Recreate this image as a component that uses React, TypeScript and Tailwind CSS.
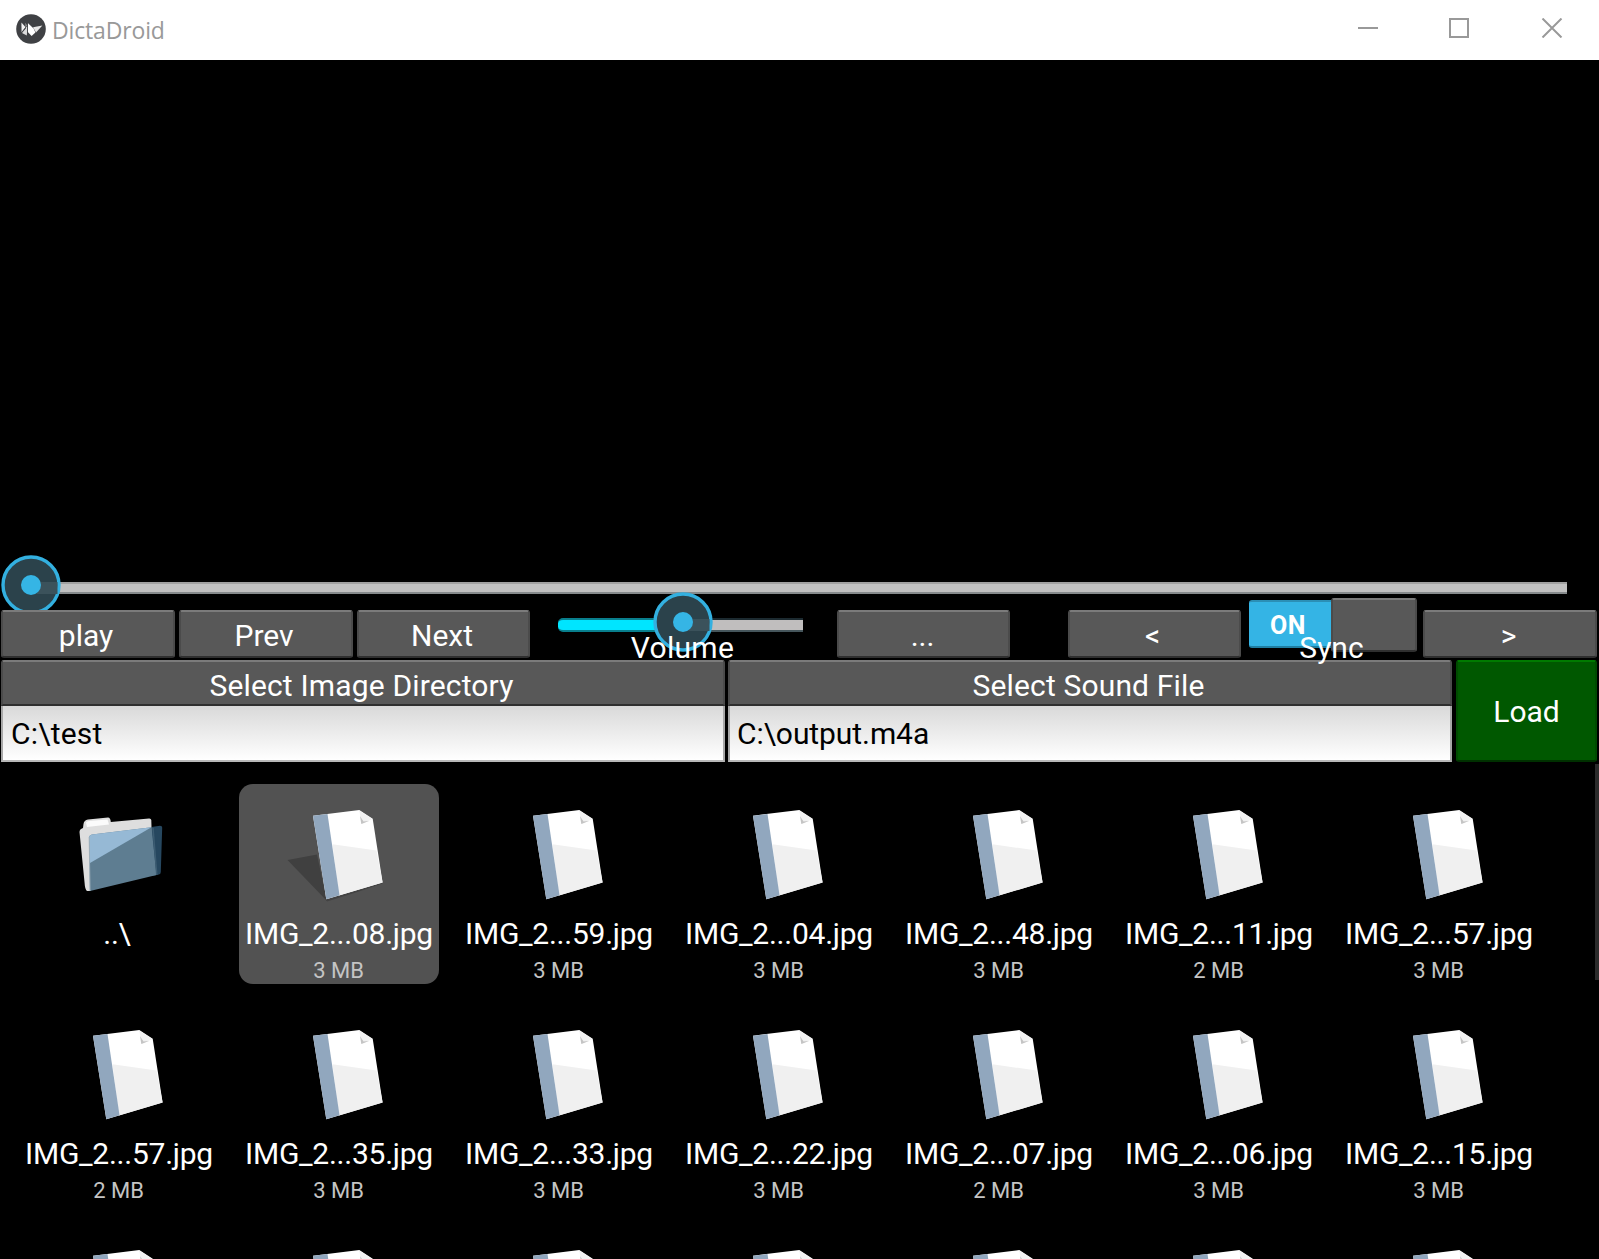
import type { ReactNode } from "react";

type Entry = { name: string; size?: string; folder?: boolean; selected?: boolean };

const entries: Entry[] = [
  { name: "..\\", folder: true },
  { name: "IMG_2...08.jpg", size: "3 MB", selected: true },
  { name: "IMG_2...59.jpg", size: "3 MB" },
  { name: "IMG_2...04.jpg", size: "3 MB" },
  { name: "IMG_2...48.jpg", size: "3 MB" },
  { name: "IMG_2...11.jpg", size: "2 MB" },
  { name: "IMG_2...57.jpg", size: "3 MB" },
  { name: "IMG_2...57.jpg", size: "2 MB" },
  { name: "IMG_2...35.jpg", size: "3 MB" },
  { name: "IMG_2...33.jpg", size: "3 MB" },
  { name: "IMG_2...22.jpg", size: "3 MB" },
  { name: "IMG_2...07.jpg", size: "2 MB" },
  { name: "IMG_2...06.jpg", size: "3 MB" },
  { name: "IMG_2...15.jpg", size: "3 MB" },
  ...Array.from({ length: 7 }, () => ({ name: "" })),
];

function AppLogo() {
  return (
    <svg className="h-[30px] w-[30px]" viewBox="0 0 30 30">
      <circle cx="15" cy="15" r="14.8" fill="#3f4144" />
      <path d="M5.4 8.400L9.600 13.200L5.600 18.200Z" fill="#f4f4f4" />
      <path d="M9.600 8.800L11.400 13.600L10.800 21.400L6 19L9.800 14.400Z" fill="#dcdcdc" />
      <path d="M11.800 9L17.600 14.600L19.400 18.600L15.600 22L11.800 18Z" fill="#fff" />
      <path d="M17 13.200L26.400 11.400L20 18.400Z" fill="#e6e6e6" />
      <path d="M5.600 18.600L11.600 11M11.500 9V20" stroke="#3f4144" strokeWidth="0.8" />
    </svg>
  );
}

function TitleBar() {
  return (
    <header className="flex h-[60px] shrink-0 items-start bg-white pl-4">
      <div className="pt-[14px]">
        <AppLogo />
      </div>
      <span className="ml-[6px] mt-[13px] font-['Open_Sans',sans-serif] text-[23px] leading-[34px] tracking-[-0.15px] text-[#999999]">
        DictaDroid
      </span>
      <svg className="ml-auto mt-[18px] h-5 w-[241px]" viewBox="0 0 241 20" fill="none" stroke="#999" strokeWidth="2">
        <path d="M0 10H20" />
        <rect x="92" y="1" width="18" height="18" />
        <path d="M184.5 0.5L203.5 19.5M203.5 0.5L184.5 19.5" />
      </svg>
    </header>
  );
}

function Knob() {
  return (
    <svg className="h-[60px] w-[60px]" viewBox="0 0 60 60">
      <circle cx="30" cy="30" r="28" fill="#2b424b" stroke="#33b0e0" strokeWidth="3.4" />
      <path d="M39 27H56.5V39H35Q39.500 36 39 27Z" fill="#3b525b" />
      <circle cx="30" cy="30" r="10" fill="#35b5e5" />
    </svg>
  );
}

function Btn({ className = "", children }: { className?: string; children?: ReactNode }) {
  return (
    <button
      className={`block rounded-[3px] border-2 border-x-[#4b4b4b] border-b-[#2f2f2f] border-t-[#7b7b7b] bg-[#585858] text-center text-white ${className}`}
    >
      {children}
    </button>
  );
}

function FileIcon() {
  return (
    <svg className="block h-[120px] w-[200px]" viewBox="0 0 200 120">
      <path d="M48.500 76L78 70.500L88 117Z" fill="#000" fillOpacity="0.22" />
      <path d="M87 115.500L88 117.500L120 107.500L143.500 99.500V98Z" fill="#000" fillOpacity="0.18" />
      <path d="M74 31.700L120.300 26L133.700 34.700L143.600 98.500L87.300 115.300Z" fill="#fff" />
      <path d="M93.500 60.300L137.500 66.500L143.600 98.500L100 111.500Z" fill="#f0f0f0" />
      <path d="M74 31.700L88.500 30L100.500 111.300L87.300 115.300Z" fill="#91a7be" />
      <path d="M120.300 26.500L122.600 40L133.500 35Z" fill="#f1f1f1" />
      <path d="M121 32L122.300 40L130 37L124.500 37.500Z" fill="#c4c4c4" />
    </svg>
  );
}

function FolderIcon() {
  return (
    <svg className="block h-[120px] w-[200px]" viewBox="0 0 200 120">
      <path
        d="M64.500 40Q65 36 69 35.500L89 33.500Q91.500 33.500 91.800 38L130 34.500Q132 34.300 132.300 36L133 60L71 107L68 107Q66 106 65.500 98L60.500 48Q60.500 45 64 44Z"
        fill="#dedede"
      />
      <path d="M67 38.500Q68 37 70 37L88.500 35.500L90 40.500L68 43Z" fill="#fbfbfb" />
      <path d="M132.500 43L141 41.700Q143.300 41.700 143.200 43.500L141.800 88Q141.700 90 140 90.500L133 92Z" fill="#26475f" />
      <path d="M70 54Q70 51 73 50.500L132.500 43.200L137.500 91L71 107Z" fill="#5e7d91" />
      <path d="M70 54Q70 51 73 50.500L132.500 43.200L71 79Z" fill="#96b9d5" />
      <path d="M134 44L137.800 91" stroke="#3c5c72" strokeWidth="1.500" />
      <path d="M70.200 53L71 107" stroke="#9fb0bb" strokeWidth="1" />
    </svg>
  );
}

function Tile({ entry }: { entry: Entry }) {
  return (
    <div
      className={`h-[200px] w-[200px] text-center ${entry.selected ? "rounded-[14px] bg-[#525252]" : ""}`}
    >
      {entry.folder ? <FolderIcon /> : <FileIcon />}
      <div
        className={`mt-3 whitespace-nowrap text-[30px] leading-9 tracking-[-0.25px] text-white ${entry.folder ? "pr-1" : ""}`}
      >
        {entry.name || "\u00a0"}
      </div>
      <div className="mt-[6px] pr-px text-[22px] leading-[26px] text-[#c4c4c4]">{entry.size ?? "\u00a0"}</div>
    </div>
  );
}

function PathPicker({ label, value, offset }: { label: string; value: string; offset: string }) {
  return (
    <div className="w-[724px]">
      <Btn className="h-[46px] w-full rounded-b-none pr-[3px] pt-[3px] leading-[42px] tracking-[0.16px]">{label}</Btn>
      <div
        className={`h-14 border-x-2 border-b-2 border-x-[#a8a8a8] border-b-[#b8b8b8] bg-gradient-to-b from-[#d9d9d9] to-white text-black ${offset}`}
      >
        <div className="leading-[56px]">{value}</div>
      </div>
    </div>
  );
}

export default function App() {
  return (
    <div className="flex h-[1259px] w-[1599px] flex-col overflow-hidden bg-black font-[Roboto,sans-serif] text-[30px] text-white">
      <TitleBar />
      <div className="h-[522px] shrink-0" />

      {/* Playback position */}
      <div className="relative ml-8 h-3 w-[1535px] shrink-0 border-b-2 border-t-2 border-b-[#868a8c] border-t-[#a0a0a0] bg-[#c0c0c0]">
        <div className="absolute -left-[31px] -top-[29px]">
          <Knob />
        </div>
      </div>

      {/* Transport controls */}
      <div className="relative mt-4 flex h-12 shrink-0 pl-px">
        <Btn className="w-[174px] pr-1 pt-[2px] leading-[44px]">play</Btn>
        <Btn className="ml-1 w-[174px] pr-1 pt-[2px] leading-[44px]">Prev</Btn>
        <Btn className="ml-1 w-[173px] pr-[3px] pt-[2px] leading-[44px]">Next</Btn>
        <div className="relative ml-[28px] mt-2 flex h-[14px] w-[245px]">
          <div className="w-[124px] rounded-l-[5px] border-y-2 border-[#087f8d] bg-[#00e5ff]" />
          <div className="w-[121px] border-b-2 border-t-2 border-b-[#46565c] border-t-[#1c2a30] bg-[#c0bebe]" />
          <div className="absolute -top-[26px] left-[95px]">
            <Knob />
          </div>
          <span className="absolute left-0 top-[9px] w-[249px] text-center leading-[42px] tracking-[0.3px]">Volume</span>
        </div>
        <Btn className="ml-[34px] w-[173px] pr-[2px] pt-[2px] leading-[44px]">...</Btn>
        <Btn className="ml-[58px] w-[173px] pr-1 pt-[2px] leading-[44px]">&lt;</Btn>
        <div className="relative ml-2 flex w-[168px]">
          <div className="-mt-[10px] h-12 w-[82px] rounded-l-[3px] border-b-2 border-t-2 border-b-[#1f7fa3] border-t-[#2b8fb6] bg-[#34b4e5] pr-1 pt-px text-center text-[25px] font-bold leading-[46px] tracking-[0.5px]">
            ON
          </div>
          <Btn className="-mt-3 h-[54px] w-[86px]" />
          <span className="absolute left-0 top-[17px] w-[165px] text-center leading-[42px]">Sync</span>
        </div>
        <Btn className="ml-[6px] w-[174px] pr-[3px] pt-[2px] leading-[44px]">&gt;</Btn>
      </div>

      {/* Source selection */}
      <div className="mt-[2px] flex h-[102px] shrink-0 pl-px">
        <PathPicker label="Select Image Directory" value={"C:\\test"} offset="pl-2 tracking-[0.2px]" />
        <div className="w-[3px]" />
        <PathPicker label="Select Sound File" value={"C:\\output.m4a"} offset="pl-[7px] tracking-[-0.08px]" />
        <button className="ml-1 w-[141px] rounded-[3px] border-2 border-x-[#004b00] border-b-[#003000] border-t-[#007a00] bg-[#005800]">
          Load
        </button>
      </div>

      {/* File browser */}
      <div className="flex flex-1 overflow-hidden">
        <div className="grid shrink-0 auto-rows-[200px] grid-cols-[repeat(7,200px)] gap-5 pl-[19px] pt-[22px]">
          {entries.map((entry, i) => (
            <Tile key={i} entry={entry} />
          ))}
        </div>
        <div className="ml-auto mt-[2px] h-[216px] w-1 bg-[#2b2b2b]" />
      </div>
    </div>
  );
}
